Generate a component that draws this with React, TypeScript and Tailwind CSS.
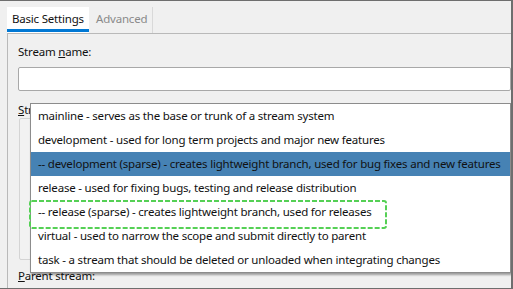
import React from "react";

const items = [
  "mainline - serves as the base or trunk of a stream system",
  "development - used for long term projects and major new features",
  "-- development (sparse) - creates lightweight branch, used for bug fixes and new features",
  "release - used for fixing bugs, testing and release distribution",
  "-- release (sparse) - creates lightweight branch, used for releases",
  "virtual - used to narrow the scope and submit directly to parent",
  "task - a stream that should be deleted or unloaded when integrating changes",
];

export default function App() {
  return (
    <div
      className="relative w-[513px] h-[289px] overflow-hidden bg-[#f0f0f0] text-[11.5px] tracking-[-0.2px] text-[#111] border-r-2 border-b border-t border-[#6e6e6e]"
      style={{ fontFamily: '"Noto Sans", "Open Sans", sans-serif' }}
    >
      {/* tabs */}
      <div className="flex h-[32px] pl-[7px] pt-[6px]">
        <div className="relative w-[82px] h-[26px] bg-white pl-[5px] pt-[4px] leading-[16px] whitespace-nowrap">
          Basic Settings
          <div className="absolute left-0 right-0 bottom-[1px] h-[3px] bg-[#0078d4]" />
        </div>
        <div className="w-[64px] h-[26px] border-r border-[#d9d9d9] pl-[7px] pt-[4px] leading-[16px] text-[#8a8a8a] whitespace-nowrap">
          Advanced
        </div>
        <div className="flex-1" />
      </div>
      {/* panel */}
      <div className="ml-[7px] h-[256px] border-l border-t border-[#b9b9b9] pl-[10px] pt-[10px]">
        <div className="leading-[16px]">
          Stream <span className="underline">n</span>ame:
        </div>
        <div className="mt-[7px] h-[24px] bg-white border border-[#a8a8a8] rounded-[2px]" />
        <div className="mt-[11px] leading-[16px] whitespace-nowrap">
          <span className="underline">S</span>tream type:
        </div>
        <div className="ml-[1px] h-[142px] w-[200px] border border-[#d4d4d4] rounded-[2px] bg-[#f2f2f2]" />
        <div className="mt-[8px] leading-[16px]">
          <span className="underline">P</span>arent stream:
        </div>
      </div>

      {/* dropdown list */}
      <div className="absolute left-[30px] right-0 top-[102px] bg-white border border-[#8c8c8c] shadow-[1px_2px_2px_rgba(0,0,0,0.35)]">
        {items.map((t, i) => (
          <div
            key={i}
            className={
              i === 2
                ? "h-[24px] leading-[24px] pl-[7px] whitespace-nowrap overflow-hidden bg-[#4682b4] text-[#111]"
                : "h-[24px] leading-[24px] pl-[7px] whitespace-nowrap overflow-hidden"
            }
          >
            {t}
          </div>
        ))}
      </div>

      {/* green dashed highlight */}
      <svg
        className="absolute left-[28px] top-[198px]"
        width="360"
        height="31"
        viewBox="0 0 360 31"
      >
        <rect
          x="2"
          y="2"
          width="356"
          height="27"
          rx="2"
          fill="none"
          stroke="#55d055"
          strokeWidth="2"
          strokeDasharray="5 2"
        />
      </svg>
    </div>
  );
}
